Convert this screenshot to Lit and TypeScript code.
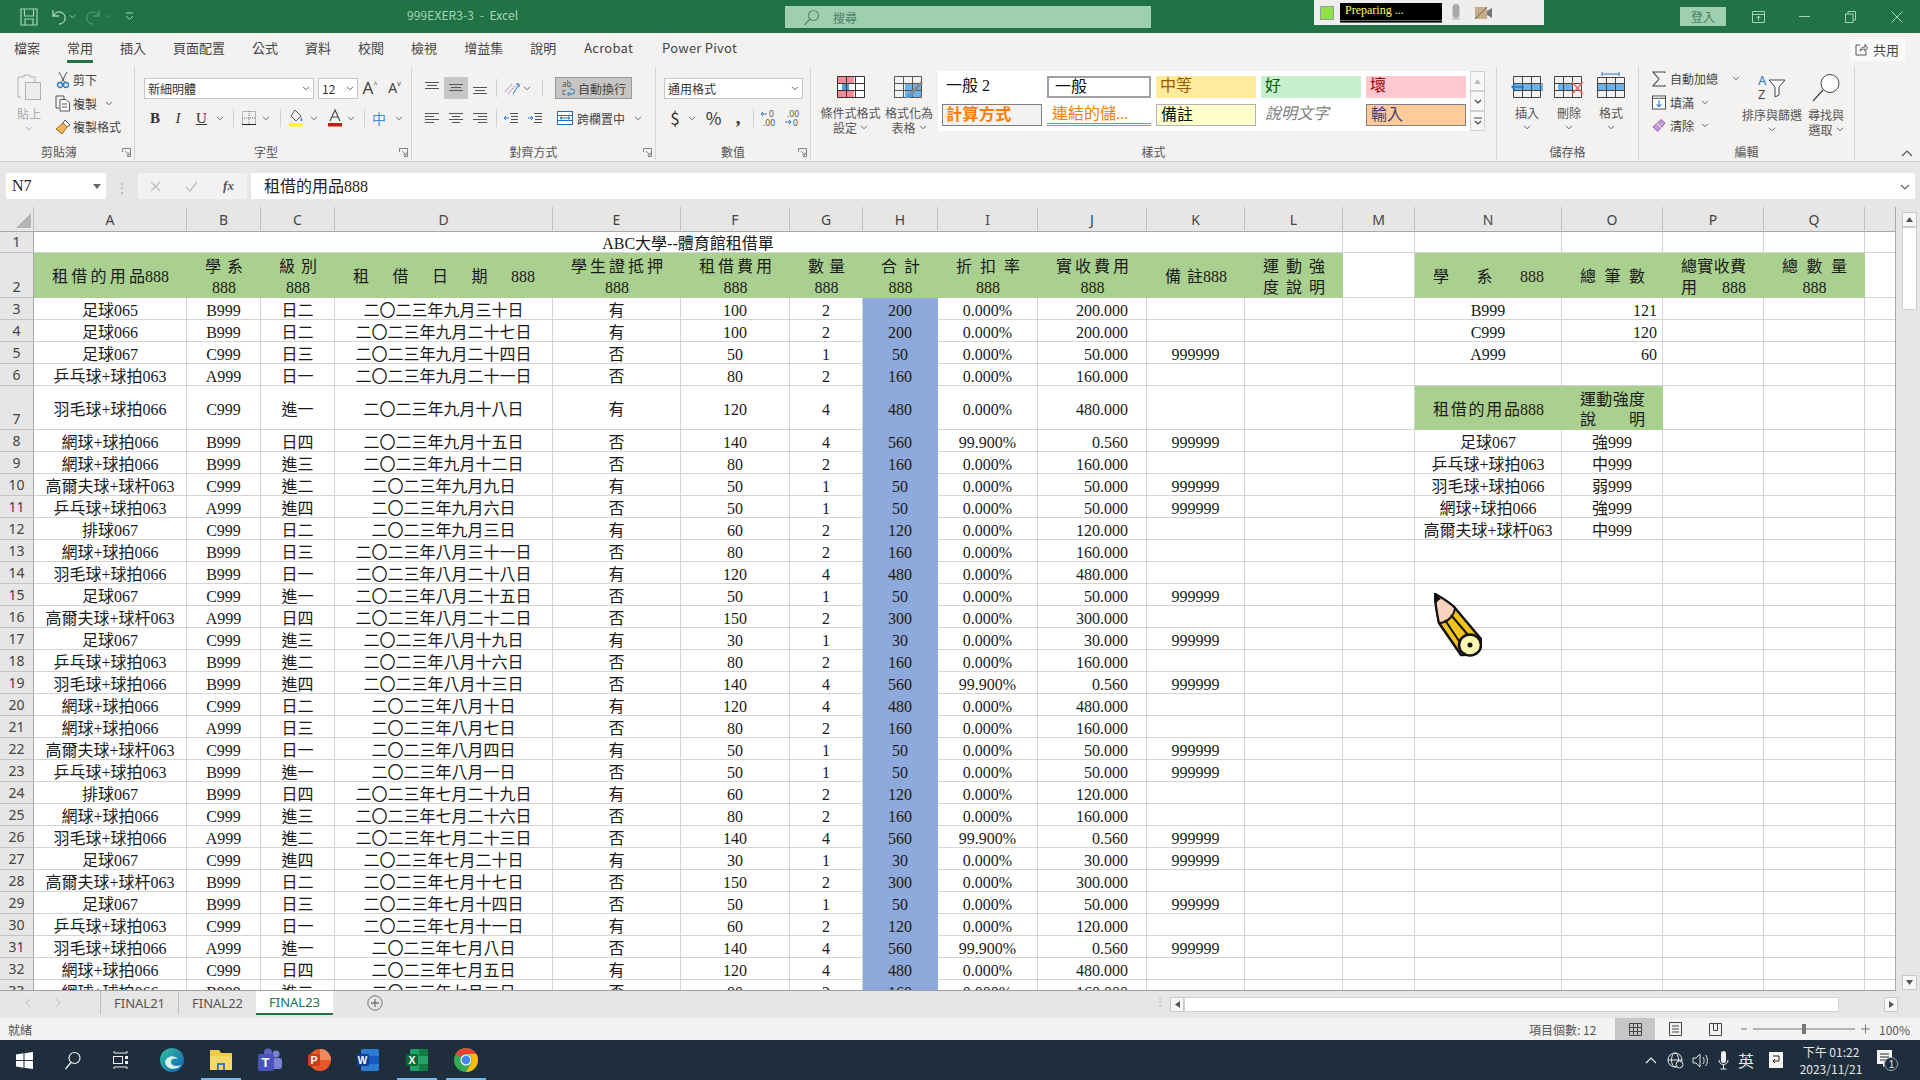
import { LitElement, html, css, svg } from "lit";
import { customElement } from "lit/decorators.js";

const DATA = `足球065 B999 日二 二〇二三年九月三十日 有 100 2 200 0.000% 200.000 -
足球066 B999 日二 二〇二三年九月二十七日 有 100 2 200 0.000% 200.000 -
足球067 C999 日三 二〇二三年九月二十四日 否 50 1 50 0.000% 50.000 999999
乒乓球+球拍063 A999 日一 二〇二三年九月二十一日 否 80 2 160 0.000% 160.000 -
羽毛球+球拍066 C999 進一 二〇二三年九月十八日 有 120 4 480 0.000% 480.000 -
網球+球拍066 B999 日四 二〇二三年九月十五日 否 140 4 560 99.900% 0.560 999999
網球+球拍066 B999 進三 二〇二三年九月十二日 否 80 2 160 0.000% 160.000 -
高爾夫球+球杆063 C999 進二 二〇二三年九月九日 有 50 1 50 0.000% 50.000 999999
乒乓球+球拍063 A999 進四 二〇二三年九月六日 否 50 1 50 0.000% 50.000 999999
排球067 C999 日二 二〇二三年九月三日 有 60 2 120 0.000% 120.000 -
網球+球拍066 B999 日三 二〇二三年八月三十一日 否 80 2 160 0.000% 160.000 -
羽毛球+球拍066 B999 日一 二〇二三年八月二十八日 有 120 4 480 0.000% 480.000 -
足球067 C999 進一 二〇二三年八月二十五日 否 50 1 50 0.000% 50.000 999999
高爾夫球+球杆063 A999 日四 二〇二三年八月二十二日 否 150 2 300 0.000% 300.000 -
足球067 C999 進三 二〇二三年八月十九日 有 30 1 30 0.000% 30.000 999999
乒乓球+球拍063 B999 進二 二〇二三年八月十六日 否 80 2 160 0.000% 160.000 -
羽毛球+球拍066 B999 進四 二〇二三年八月十三日 否 140 4 560 99.900% 0.560 999999
網球+球拍066 C999 日二 二〇二三年八月十日 有 120 4 480 0.000% 480.000 -
網球+球拍066 A999 日三 二〇二三年八月七日 否 80 2 160 0.000% 160.000 -
高爾夫球+球杆063 C999 日一 二〇二三年八月四日 有 50 1 50 0.000% 50.000 999999
乒乓球+球拍063 B999 進一 二〇二三年八月一日 否 50 1 50 0.000% 50.000 999999
排球067 B999 日四 二〇二三年七月二十九日 有 60 2 120 0.000% 120.000 -
網球+球拍066 C999 進三 二〇二三年七月二十六日 否 80 2 160 0.000% 160.000 -
羽毛球+球拍066 A999 進二 二〇二三年七月二十三日 否 140 4 560 99.900% 0.560 999999
足球067 C999 進四 二〇二三年七月二十日 有 30 1 30 0.000% 30.000 999999
高爾夫球+球杆063 B999 日二 二〇二三年七月十七日 否 150 2 300 0.000% 300.000 -
足球067 B999 日三 二〇二三年七月十四日 否 50 1 50 0.000% 50.000 999999
乒乓球+球拍063 C999 日一 二〇二三年七月十一日 有 60 2 120 0.000% 120.000 -
羽毛球+球拍066 A999 進一 二〇二三年七月八日 否 140 4 560 99.900% 0.560 999999
網球+球拍066 C999 日四 二〇二三年七月五日 有 120 4 480 0.000% 480.000 -
網球+球拍066 B999 進二 二〇二三年七月二日 否 80 2 160 0.000% 160.000 -`
  .split("\n").map((l) => l.split(" ").map((v) => (v === "-" ? "" : v)));

const HEADS_L = [
  ["租 借 的 用 品888"], ["學 系", "888"], ["級 別", "888"], ["租 借 日 期 888"],
  ["學 生 證 抵 押", "888"], ["租 借 費 用", "888"], ["數 量", "888"], ["合 計", "888"],
  ["折 扣 率", "888"], ["實 收 費 用", "888"], ["備 註888"], ["運 動 強", "度 說 明"],
];
const HEADS_R = [["學 系 888"], ["總 筆 數"], ["總 實 收 費", "用 888"], ["總 數 量", "888"]];
const HEADS_7 = [["租 借 的 用 品888"], ["運 動 強 度", "說 明"]];
const SIDE: Record<number, [string, string, string]> = {
  3: ["B999", "121", "rs"], 4: ["C999", "120", "rs"], 5: ["A999", "60", "rs"],
  8: ["足球067", "強999", ""], 9: ["乒乓球+球拍063", "中999", ""], 10: ["羽毛球+球拍066", "弱999", ""],
  11: ["網球+球拍066", "強999", ""], 12: ["高爾夫球+球杆063", "中999", ""],
};

const chev = (c = "#666") => svg`<svg width="8" height="5" viewBox="0 0 8 5"><path d="M1 .8l3 3 3-3" fill="none" stroke="${c}" stroke-width="1"/></svg>`;
const launcher = () => html`<svg class="launch" width="9" height="9" viewBox="0 0 9 9"><path d="M.5 4V.5H8.5V8.5H5M3 3l4 4M7 4.5V7H4.5" fill="none" stroke="#777" stroke-width=".9"/></svg>`;
const lines = (kind: "top" | "mid" | "bot") => svg`<svg width="16" height="16" viewBox="0 0 16 16"><path d="${kind === "top" ? "M1 2.5H15M3 5.5H13M1 8.5H15" : kind === "mid" ? "M1 4.5H15M3 7.5H13M1 10.5H15" : "M1 7.5H15M3 10.5H13M1 13.5H15"}" stroke="#555" stroke-width="1"/></svg>`;
const halign = (kind: "l" | "c" | "r") => svg`<svg width="16" height="16" viewBox="0 0 16 16"><path d="${kind === "l" ? "M1 3.5H15M1 6.5H10M1 9.5H15M1 12.5H10" : kind === "c" ? "M1 3.5H15M4 6.5H12M1 9.5H15M4 12.5H12" : "M1 3.5H15M6 6.5H15M1 9.5H15M6 12.5H15"}" stroke="#555" stroke-width="1"/></svg>`;

@customElement("app-root")
export class AppRoot extends LitElement {
  static styles = css`
    :host { display: block; width: 1920px; height: 1080px; overflow: hidden; background: #e6e6e6;
      font-family: "Noto Sans CJK TC", "Noto Sans", sans-serif; font-size: 12px; color: #444; }
    * { box-sizing: border-box; }
    svg { display: block; flex: none; }
    .page { display: flex; flex-direction: column; height: 1080px; }

    .title { height: 33px; background: #217346; display: flex; color: #a3d6b8; flex: none; }
    .qat { width: 407px; display: flex; align-items: center; padding-left: 20px; flex: none; }
    .qat .save { margin-right: 13px; }
    .qat .gapa { margin: 0 10px 0 3px; }
    .qat .gapb { margin: 0 14px 0 3px; }
    .doc { width: 378px; flex: none; line-height: 30px; font-size: 12px; letter-spacing: .1px; }
    .search { width: 366px; height: 22px; margin-top: 6px; background: #9dcfb0; display: flex; align-items: center; padding-left: 18px; gap: 13px; color: #4f8065; flex: none; font-size: 12px; }
    .rec { margin-left: 163px; width: 230px; height: 25px; background: #eeeeee; display: flex; align-items: center; padding-left: 6px; flex: none; }
    .rec .sq { width: 14px; height: 14px; background: #8fe04a; border: 1px solid #9a9a9a; }
    .rec .blk { width: 102px; height: 20px; margin: 0 9px 0 6px; background: #000; color: #ffff66; font: 12px/15px "Liberation Serif", serif; padding-left: 5px; border-bottom: 3px double #666; }
    .rec .cam { margin-left: 14px; }
    .login { margin: 7px 0 0 136px; width: 46px; height: 19px; background: #9dcfb0; color: #4f8065; text-align: center; line-height: 19px; flex: none; }
    .wbtns { display: flex; margin-left: 9px; }
    .wbtns div { width: 46.3px; height: 33px; display: flex; align-items: center; justify-content: center; }

    .tabs { height: 33px; background: #f3f2f1; display: flex; align-items: center; padding: 0 0 3px .5px; font-size: 13px; flex: none; }
    .tab { padding: 0 13.5px; position: relative; line-height: 30px; color: #444; }
    .tab.lat { letter-spacing: .25px; padding: 0 14.5px; }
    .tab.on::after { content: ""; position: absolute; left: 13.5px; right: 13.5px; top: 27px; height: 2.5px; background: #217346; }
    .share { margin-left: auto; margin-right: 15.5px; width: 55px; height: 22px; background: #fafafa; display: flex; align-items: center; justify-content: center; gap: 5px; font-size: 13px; margin-top: 3px; }

    .ribbon { height: 96px; background: #f3f2f1; border-bottom: 1px solid #d2d0ce; display: flex; flex: none; }
    .group { position: relative; height: 93px; margin-top: 1px; padding-top: 9px; border-right: 1px solid #d8d6d4; flex: none; display: flex; flex-direction: column; }
    .g1 { width: 135px; } .g2 { width: 277px; } .g3 { width: 244px; } .g4 { width: 155px; } .g5 { width: 686px; } .g6 { width: 142px; } .g7 { width: 216px; }
    .gbody { display: flex; align-items: flex-start; }
    .glabel { margin-top: auto; height: 16px; line-height: 16px; text-align: center; color: #555; flex: none; }
    .g1 .glabel { padding-right: 16px; } .g2 .glabel { padding-right: 14px; }
    .launch { position: absolute; right: 3px; bottom: 3px; }

    .paste { width: 46px; margin-left: 6px; margin-top: -3px; display: flex; flex-direction: column; align-items: center; color: #aaa; }
    .paste span { line-height: 15px; margin-top: 5px; margin-bottom: 5px; }
    .clip { margin-left: 1px; margin-top: -8px; }
    .clip div { height: 23.5px; display: flex; align-items: center; }
    .clip .ic { width: 20px; display: flex; justify-content: center; }
    .clip svg.cv { margin-left: 8px; }

    .rows { display: flex; flex-direction: column; gap: 8px; margin-top: 1px; }
    .r-font { padding-left: 9px; } .r-align { padding-left: 8px; } .r-num { padding: 0 7px 0 8px; }
    .grid { display: grid; align-items: center; justify-items: center; height: 22px; }
    .select { height: 21px; background: #fff; border: 1px solid #c8c6c4; display: flex; align-items: center; justify-content: space-between; padding: 0 3px 0 3px; color: #333; }
    .f1 { grid-template-columns: 170px 4px 40px 24px 25px; }
    .f2 { grid-template-columns: 22px 24px 23px 14px 13px 18px 15px 14px 18px 18px 23px 10px 16px 14px 26px; }
    .a1 { grid-template-columns: 24px 24px 24px 8px 24px 6px 25px 77px; }
    .a2 { grid-template-columns: 24px 24px 24px 8px 22px 25px 10px 76px 10px; }
    .n1 { grid-template-columns: 1fr; }
    .n2 { grid-template-columns: 22px 12px 31px 18px 13px 17px 30px; }
    .w-font, .w-num { justify-self: stretch; } .w-size { grid-column: 3; justify-self: stretch; }
    .bigA { font-size: 17px; line-height: 22px; color: #444; font-family: "Noto Sans", sans-serif; }
    .smallA { font-size: 14px; line-height: 22px; color: #444; font-family: "Noto Sans", sans-serif; }
    .bigA sup, .smallA sup { font-size: 7px; vertical-align: 7px; line-height: 0; }
    .tb { font-family: "Liberation Serif", serif; font-size: 15px; color: #333; line-height: 22px; }
    .tb.b { font-weight: 700; } .tb.i { font-style: italic; } .tb.u { text-decoration: underline; }
    .vsep { width: 1px; height: 18px; background: #d2d0ce; }
    .sel { justify-self: stretch; height: 22px; background: #c8c6c4; border: 1px solid #9a9a9a; display: flex; align-items: center; justify-content: center; gap: 2px; white-space: nowrap; }
    .sel2 { justify-self: stretch; height: 22px; background: #c8c6c4; display: flex; align-items: center; justify-content: center; }
    .merge { display: flex; align-items: center; gap: 4px; justify-self: start; white-space: nowrap; }
    .phon { color: #3f8fd6; font-size: 14px; line-height: 22px; }
    .dollar { font-size: 17px; color: #333; line-height: 22px; }
    .pct { font-size: 17px; color: #333; line-height: 22px; }
    .comma { font: 700 19px/14px "Liberation Serif", serif; color: #333; }

    .big { display: flex; flex-direction: column; align-items: center; line-height: 15px; color: #555; text-align: center; }
    .big .lab { margin-top: 7px; white-space: nowrap; }
    .big .low { display: flex; align-items: center; gap: 3px; justify-content: center; height: 15px; white-space: nowrap; }
    .cf { width: 59px; margin-left: 10px; margin-top: 0; }
    .cf2 { width: 58px; }
    .gal { width: 547px; height: 60px; margin-top: -5px; display: flex; background: #fff; flex: none; }
    .gal-cells { width: 532px; padding: 5px 0 0 4px; display: grid; grid-template-columns: 100px 104px 100px 100px 100px; grid-template-rows: 22px 22px; gap: 6px 5px; font: 16px/20px "Liberation Serif", "Noto Sans CJK TC", serif; color: #111; }
    .st { padding-left: 4px; line-height: 20px; white-space: nowrap; }
    .st.plain { border: 2px solid #a0a0a0; background: #fff; padding-left: 6px; line-height: 18px; }
    .st.mid { background: #ffeb9c; color: #9c5700; }
    .st.good { background: #c6efce; color: #006100; }
    .st.bad { background: #ffc7ce; color: #9c0006; }
    .st.calc { background: #f2f2f2; border: 1px solid #7f7f7f; color: #fa7d00; font-weight: 700; padding-left: 3px; letter-spacing: .4px; }
    .st.link { color: #fa7d00; border-bottom: 3px double #fa7d00; padding-left: 5px; }
    .st.note { background: #ffffcc; border: 1px solid #b2b2b2; padding-left: 4px; }
    .st.desc { color: #7f7f7f; font-style: italic; }
    .st.inp { background: #ffcc99; border: 1px solid #7f7f7f; color: #3f3f76; padding-left: 4px; }
    .gal-btns { width: 15px; display: flex; flex-direction: column; }
    .gal-btns div { flex: 1; background: #f8f8f8; border: 1px solid #d2d0ce; display: flex; align-items: center; justify-content: center; }
    .cellcol { width: 42px; }
    .cells-pad { padding-left: 9px; }
    .fmt { margin-top: -4px; }
    .edit { margin: -9px 0 0 13px; width: 92px; flex: none; }
    .edit div { height: 23.5px; display: flex; align-items: center; gap: 4px; }
    .edit svg.cv { margin-left: 3px; }
    .edit svg.cv2 { margin-left: 10px; }
    .sortcol { width: 56px; margin-top: -3px; } .findcol { width: 52px; margin-top: -3px; }
    .sortcol .lab { margin-top: 7px; } .findcol .lab { margin-top: 4px; }
    .collapse { align-self: flex-end; margin: 0 0 4px 46px; }

    .fbar { height: 45px; padding: 11px 5px 0 6px; display: flex; flex: none; background: #e6e6e6; }
    .namebox { width: 100px; height: 26px; background: #fff; display: flex; align-items: center; justify-content: space-between; padding: 0 5px 0 6px; font: 16px "Liberation Serif", serif; color: #222; }
    .grip { width: 32px; height: 26px; display: flex; align-items: center; justify-content: center; color: #aaa; font-size: 12px; }
    .fxs { width: 109px; height: 26px; background: #f2f2f2; display: grid; grid-template-columns: 34px 38px 37px; align-items: center; justify-items: center; }
    .fx { font: italic 700 13px "Liberation Serif", serif; color: #555; }
    .finput { margin-left: 4px; flex: 1; height: 26px; background: #fff; display: flex; align-items: center; justify-content: space-between; padding: 2px 5px 0 13px; font: 16px/20px "Liberation Serif", "Noto Sans CJK TC", serif; color: #222; }

    .work { height: 784px; position: relative; display: flex; overflow: hidden; flex: none; }
    .sheet { width: 1896px; height: 784px; overflow: hidden; flex: none; display: grid; background: #fff;
      grid-template-columns: 34px 153px 74px 74px 218px 128px 109px 73px 75px 100px 109px 98px 98px 72px 147px 101px 101px 101px 31px;
      grid-template-rows: 25px 21px 45px repeat(4, 22px) 44px repeat(26, 22px);
      font: 16px/20px "Liberation Serif", "Noto Sans CJK TC", serif; color: #1a1a1a; border-right: 1px solid #a8a8a8; border-bottom: 1px solid #a0a0a0; }
    .ch { background: #e6e6e6; border-right: 1px solid #c0c0c0; border-bottom: 1px solid #a8a8a8; display: flex; align-items: center; justify-content: center; font: 14px "Noto Sans", sans-serif; color: #444; }
    .corner { background: #e6e6e6; border-right: 1px solid #c0c0c0; border-bottom: 1px solid #a8a8a8; display: flex; align-items: flex-end; justify-content: flex-end; padding: 0 2px 3px 0; }
    .rh { background: #e6e6e6; border-right: 1px solid #a8a8a8; border-bottom: 1px solid #c4c4c4; display: flex; align-items: flex-end; justify-content: center; font: 14px/20px "Noto Sans", sans-serif; color: #444; }
    .c { border-right: 1px solid #d4d4d4; border-bottom: 1px solid #d4d4d4; display: flex; align-items: center; justify-content: center; padding-top: 4px; white-space: nowrap; overflow: hidden; }
    .span { grid-column: span 12; padding-top: 3px; }
    .blue { background: #8ea9db; border-color: #8ea9db; }
    .right { justify-content: flex-end; padding-right: 18px; }
    .rs { justify-content: flex-end; padding-right: 5px; }
    .hd { background: #a9d08e; border: 0; flex-direction: column; align-items: stretch; justify-content: center; padding: 4px 18px 0; line-height: 20.5px; }
    .ln { display: flex; justify-content: space-between; }
    .ln.one { justify-content: center; }
    .pencil { position: absolute; left: 1434px; top: 386px; }

    .vbar { width: 24px; padding: 5px 3px 1px 6px; display: flex; flex-direction: column; flex: none; }
    .vbar .arr { height: 15px; background: #f8f8f8; border: 1px solid #c8c8c8; display: flex; align-items: center; justify-content: center; flex: none; }
    .vbar .thumb { height: 83px; background: #fff; border: 1px solid #d0d0d0; flex: none; }
    .vbar .trk { flex: 1; background: #e6e6e6; }

    .sheets { height: 27px; background: #e6e6e6; display: flex; flex: none; color: #555; font-size: 13px; font-family: "Noto Sans", sans-serif; }
    .nav { width: 100px; display: flex; align-items: center; padding-left: 26px; gap: 24px; height: 23px; }
    .st-tab { width: 78px; height: 23px; border-left: 1px solid #bdbdbd; display: flex; align-items: center; justify-content: center; color: #555; line-height: 16px; }
    .st-tab.act { width: 77px; height: 24px; background: #fff; color: #217346; border: 0; border-bottom: 2px solid #217346; }
    .plus { margin: 4px 0 0 34px; width: 16px; height: 16px; }
    .dots { margin: 0 0 0 770px; width: 14px; text-align: center; line-height: 20px; color: #888; font-size: 10px; }
    .hs { margin: 6px 0 0 3px; display: flex; height: 15px; width: 728px; }
    .hs .btn { width: 14px; background: #f8f8f8; border: 1px solid #c8c8c8; display: flex; align-items: center; justify-content: center; flex: none; }
    .hs .thumb { width: 655px; background: #fff; border: 1px solid #d0d0d0; flex: none; }
    .hs .rest { flex: 1; }

    .status { height: 22px; background: #f3f2f1; display: flex; align-items: center; padding-left: 8px; flex: none; color: #555; }
    .status span { white-space: nowrap; flex: none; }
    .ready { width: 24px; }
    .status .count { margin-left: 1497px; width: 86px; }
    .view { width: 40px; height: 22px; display: flex; align-items: center; justify-content: center; flex: none; }
    .view.on { background: #c8c6c4; }
    .zoom-s { width: 137px; display: flex; align-items: center; height: 22px; margin-left: 2px; flex: none; }
    .zoom-v { margin-left: 5px; color: #555; }

    .taskbar { height: 40px; background: #1f2e3c; display: flex; flex: none; color: #e4e6e8; }
    .task { width: 48px; height: 40px; display: flex; align-items: center; justify-content: center; position: relative; flex: none; }
    .t3 { margin-right: 3px; } .task.app { width: 49px; }
    .task.act::after { content: ""; position: absolute; left: 5px; right: 4px; bottom: 0; height: 2px; background: #76b9ed; }
    .tray { margin-left: auto; display: grid; grid-template-columns: 24px 25px 24px 22px 24px 36px 74px 38px 14px; align-items: center; justify-items: center; height: 40px; }
    .ying { font-size: 16px; color: #e8e8e8; }
    .clock { text-align: center; line-height: 17px; font-size: 12px; white-space: nowrap; }
  `;

  private head(lines: string[]) {
    return html`<div class="c hd">${lines.map((l) => {
      const t = l.split(" ");
      return html`<div class="ln ${t.length === 1 ? "one" : ""}">${t.map((x) => html`<span>${x}</span>`)}</div>`;
    })}</div>`;
  }

  private renderSheet() {
    const cols = "ABCDEFGHIJKLMNOPQ".split("");
    const blank = html`<div class="c"></div>`;
    return html`<div class="sheet">
      <div class="corner"><svg width="15" height="15" viewBox="0 0 15 15"><path d="M15 0V15H0Z" fill="#b4b4b4"/></svg></div>
      ${cols.map((c) => html`<div class="ch">${c}</div>`)}
      <div class="ch"></div>

      <div class="rh">1</div>
      <div class="c span">ABC大學--體育館租借單</div>
      ${blank}${blank}${blank}${blank}${blank}${blank}

      <div class="rh">2</div>
      ${HEADS_L.map((h) => this.head(h))}
      ${blank}
      ${HEADS_R.map((h) => this.head(h))}
      ${blank}

      ${DATA.map((row, i) => {
        const n = i + 3;
        const s = SIDE[n];
        return html`<div class="rh">${n}</div>
          ${row.slice(0, 10).map((v, k) => html`<div class="c ${k === 7 ? "blue" : ""} ${k === 9 ? "right" : ""}">${v}</div>`)}
          <div class="c">${row[10]}</div>
          ${blank}${blank}
          ${n === 7
            ? html`${this.head(HEADS_7[0])}${this.head(HEADS_7[1])}`
            : s
            ? html`<div class="c">${s[0]}</div><div class="c ${s[2]}">${s[1]}</div>`
            : html`${blank}${blank}`}
          ${blank}${blank}${blank}`;
      })}
    </div>`;
  }

  private renderRibbon() {
    return html`<div class="ribbon">
      <div class="group g1">
        <div class="gbody">
          <div class="paste">
            <svg width="27" height="28" viewBox="0 0 27 28"><path d="M2 4H8V2H14V4H19V9M5 24H2V4" fill="none" stroke="#b0b0b0"/><rect x="9.5" y="9.5" width="15" height="17" fill="#ececec" stroke="#b0b0b0"/></svg>
            <span>貼上</span>
            ${chev("#aaa")}
          </div>
          <div class="clip">
            <div><span class="ic"><svg width="14" height="18" viewBox="0 0 14 18"><path d="M3 1L9 12M11 1L5 12" stroke="#555" fill="none"/><circle cx="4" cy="14" r="2.5" fill="none" stroke="#2b79c2" stroke-width="1.3"/><circle cx="10" cy="14" r="2.5" fill="none" stroke="#2b79c2" stroke-width="1.3"/></svg></span><span>剪下</span></div>
            <div><span class="ic"><svg width="16" height="17" viewBox="0 0 16 17"><path d="M4 13H1V1H9V4" fill="none" stroke="#555"/><path d="M5 4.5H11L14.5 8V16H5Z M7 9H12M7 12H12" fill="#fff" stroke="#555"/></svg></span><span>複製</span><svg class="cv" width="8" height="5" viewBox="0 0 8 5"><path d="M1 .8l3 3 3-3" fill="none" stroke="#666"/></svg></div>
            <div><span class="ic"><svg width="17" height="17" viewBox="0 0 17 17"><path d="M10 2L15 7L12 9L8 5Z" fill="#f5f5f5" stroke="#555"/><path d="M8 5L12 9L7 16L1 11Z" fill="#f2b257" stroke="#a86a20"/></svg></span><span>複製格式</span></div>
          </div>
        </div>
        <div class="glabel">剪貼簿</div>${launcher()}
      </div>

      <div class="group g2">
        <div class="rows r-font">
          <div class="grid f1">
            <div class="select w-font"><span>新細明體</span>${chev()}</div>
            <div class="select w-size"><span>12</span>${chev()}</div>
            <span class="bigA">A<sup>^</sup></span>
            <span class="smallA">A<sup>v</sup></span>
          </div>
          <div class="grid f2">
            <span class="tb b">B</span><span class="tb i">I</span><span class="tb u">U</span>${chev()}
            <i class="vsep"></i>
            <svg width="16" height="16" viewBox="0 0 16 16"><rect x="1.5" y="1.5" width="13" height="13" fill="none" stroke="#777" stroke-dasharray="1 1"/><path d="M8 1V15M1 8H15" stroke="#777" stroke-dasharray="1 1"/><path d="M1 14.5H15" stroke="#222"/></svg>
            ${chev()}<i class="vsep"></i>
            <svg width="16" height="18" viewBox="0 0 16 18"><path d="M7 1L13 7L8 12L3 7Z" fill="none" stroke="#555"/><path d="M13 8c1 2 2 3 1 4s-2-1-1-4" fill="#2b79c2"/><rect x="1" y="14" width="14" height="3.5" fill="#ffff00"/></svg>
            ${chev()}
            <svg width="16" height="18" viewBox="0 0 16 18"><path d="M3 12L8 1L13 12M5 8H11" fill="none" stroke="#444" stroke-width="1.1"/><rect x="1" y="14" width="14" height="3.5" fill="#e01010"/></svg>
            ${chev()}<i class="vsep"></i>
            <span class="phon">中</span>${chev()}
          </div>
        </div>
        <div class="glabel">字型</div>${launcher()}
      </div>

      <div class="group g3">
        <div class="rows r-align">
          <div class="grid a1">
            ${lines("top")}
            <div class="sel2">${lines("mid")}</div>
            ${lines("bot")}
            <i class="vsep"></i>
            <svg width="18" height="16" viewBox="0 0 18 16"><path d="M2 12L9 4M5 14L12 6" stroke="#8a6fb0" stroke-dasharray="2 1" fill="none"/><path d="M10 14L16 4M13 4H16V7" stroke="#2b79c2" fill="none"/></svg>
            ${chev()}
            <i class="vsep"></i>
            <div class="sel"><svg width="15" height="18" viewBox="0 0 15 18"><text x="1" y="8" font-size="8" fill="#555" font-family="Noto Sans">ab</text><text x="1" y="16" font-size="8" fill="#555" font-family="Noto Sans">c</text><path d="M7 15H11A2.500 2.500 0 0 0 11 10H9M8.500 13L6.500 15L8.500 17" fill="none" stroke="#2b79c2"/></svg><span>自動換行</span></div>
          </div>
          <div class="grid a2">
            ${halign("l")}${halign("c")}${halign("r")}
            <i class="vsep"></i>
            <svg width="16" height="16" viewBox="0 0 16 16"><path d="M7 3.5H15M8 6.5H15M8 9.5H15M7 12.5H15" stroke="#555"/><path d="M6 8H1M3 6L1 8L3 10" stroke="#2b79c2" fill="none"/></svg>
            <svg width="16" height="16" viewBox="0 0 16 16"><path d="M7 3.5H15M8 6.5H15M8 9.5H15M7 12.5H15" stroke="#555"/><path d="M1 8H6M4 6L6 8L4 10" stroke="#2b79c2" fill="none"/></svg>
            <span></span>
            <div class="merge"><svg width="16" height="16" viewBox="0 0 16 16"><rect x=".5" y="1.5" width="15" height="13" fill="#fff" stroke="#1f6fb5"/><path d="M.5 5.5H15.5M.5 10.5H15.5" stroke="#1f6fb5"/><path d="M3 8H13M5 6.5L3 8L5 9.5M11 6.5L13 8L11 9.5" stroke="#1f6fb5" fill="none"/></svg><span>跨欄置中</span></div>
            ${chev()}
          </div>
        </div>
        <div class="glabel">對齊方式</div>${launcher()}
      </div>

      <div class="group g4">
        <div class="rows r-num">
          <div class="grid n1"><div class="select w-num"><span>通用格式</span>${chev()}</div></div>
          <div class="grid n2">
            <span class="dollar">$</span>${chev()}<span class="pct">%</span><span class="comma">,</span>
            <i class="vsep"></i>
            <svg width="17" height="18" viewBox="0 0 17 18"><path d="M1 5H7M3 3L1 5L3 7" stroke="#2b79c2" fill="none"/><text x="9" y="8" font-size="8.500" fill="#555" font-family="Noto Sans">0</text><text x="3" y="17" font-size="8.500" fill="#555" font-family="Noto Sans">.00</text></svg>
            <svg width="17" height="18" viewBox="0 0 17 18"><text x="3" y="8" font-size="8.500" fill="#555" font-family="Noto Sans">.00</text><path d="M1 13H7M5 11L7 13L5 15" stroke="#2b79c2" fill="none"/><text x="9" y="17" font-size="8.500" fill="#555" font-family="Noto Sans">0</text></svg>
          </div>
        </div>
        <div class="glabel">數值</div>${launcher()}
      </div>

      <div class="group g5">
        <div class="gbody">
          <div class="big cf">
            <svg width="28" height="22" viewBox="0 0 28 22"><rect width="28" height="22" fill="#fff"/><rect x="0" y="0" width="17" height="7" fill="#f78a97"/><rect x="0" y="15" width="17" height="7" fill="#f78a97"/><rect x="5" y="7" width="7" height="8" fill="#5b9bd5"/><path d="M.5.5H27.5V21.5H.5ZM9.5 0V22M18.5 0V22M0 7.5H28M0 14.5H28" fill="none" stroke="#333"/></svg>
            <span class="lab">條件式格式</span>
            <span class="low">設定 ${chev()}</span>
          </div>
          <div class="big cf2">
            <svg width="30" height="22" viewBox="0 0 30 22"><rect x="11" y="7" width="16" height="15" fill="#6eb2e8"/><path d="M.5.5H27.5V21.5H.5ZM9.5 0V22M18.5 0V22M0 7.5H28M0 14.5H28" fill="none" stroke="#555"/><path d="M28 6L17 18" stroke="#8a8a8a" stroke-width="3"/><path d="M17 17c-3 0-4 3-6 5c3 0 7 0 8-3Z" fill="#5b9bd5"/></svg>
            <span class="lab">格式化為</span>
            <span class="low">表格 ${chev()}</span>
          </div>
          <div class="gal">
            <div class="gal-cells">
              <div class="st">一般 2</div><div class="st plain">一般</div><div class="st mid">中等</div><div class="st good">好</div><div class="st bad">壞</div>
              <div class="st calc">計算方式</div><div class="st link">連結的儲...</div><div class="st note">備註</div><div class="st desc">說明文字</div><div class="st inp">輸入</div>
            </div>
            <div class="gal-btns">
              <div><svg width="7" height="5" viewBox="0 0 7 5"><path d="M3.5 0L7 5H0Z" fill="#bbb"/></svg></div>
              <div><svg width="8" height="5" viewBox="0 0 8 5"><path d="M1 1l3 3 3-3" fill="none" stroke="#444" stroke-width="1.2"/></svg></div>
              <div><svg width="8" height="8" viewBox="0 0 8 8"><path d="M0 1H8M1 4l3 3 3-3" fill="none" stroke="#444" stroke-width="1.2"/></svg></div>
            </div>
          </div>
        </div>
        <div class="glabel">樣式</div>
      </div>

      <div class="group g6">
        <div class="gbody cells-pad">
          <div class="big cellcol">
            <svg width="32" height="22" viewBox="0 0 32 22"><rect x="2" y="7" width="30" height="8" fill="#6eb2e8"/><path d="M2.5.5H29.5V21.5H2.5ZM11.5 0V22M20.5 0V22M2 7.5H30M2 14.5H30" fill="none" stroke="#444"/><path d="M13 11H1M5 7L1 11L5 15" fill="none" stroke="#2b79c2" stroke-width="1.4"/></svg>
            <span class="lab">插入</span><span class="low">${chev()}</span>
          </div>
          <div class="big cellcol">
            <svg width="30" height="22" viewBox="0 0 30 22"><rect x="4" y="7" width="14" height="8" fill="#6eb2e8"/><path d="M.5.5H27.5V21.5H.5ZM9.5 0V22M18.5 0V22M0 7.5H28M0 14.5H28" fill="none" stroke="#444"/><path d="M18 6L29 18M29 6L18 18" stroke="#e46a6a" stroke-width="1.6"/></svg>
            <span class="lab">刪除</span><span class="low">${chev()}</span>
          </div>
          <div class="big cellcol">
            <svg class="fmt" width="28" height="26" viewBox="0 0 28 26"><path d="M5 2H22M5 0V4M22 0V4" stroke="#2b79c2"/><rect y="11" x="1" width="26" height="7" fill="#6eb2e8"/><path d="M.5 5.5H27.5V25.500H.5ZM9.5 5V26M18.5 5V26M0 11.5H28M0 18.5H28" fill="none" stroke="#444"/></svg>
            <span class="lab">格式</span><span class="low">${chev()}</span>
          </div>
        </div>
        <div class="glabel">儲存格</div>
      </div>

      <div class="group g7">
        <div class="gbody">
          <div class="edit">
            <div><svg width="14" height="16" viewBox="0 0 14 16"><path d="M13 2V1H1L7 8L1 15H13V14" fill="none" stroke="#444" stroke-width="1.1"/></svg><span>自動加總</span><svg class="cv2" width="8" height="5" viewBox="0 0 8 5"><path d="M1 .8l3 3 3-3" fill="none" stroke="#666"/></svg></div>
            <div><svg width="14" height="15" viewBox="0 0 15 15"><rect x=".5" y=".5" width="14" height="14" fill="#fff" stroke="#444"/><path d="M0 3H15" stroke="#444"/><path d="M7.5 5V12M5 9.5L7.5 12L10 9.5" fill="none" stroke="#2b79c2" stroke-width="1.2"/></svg><span>填滿</span><svg class="cv" width="8" height="5" viewBox="0 0 8 5"><path d="M1 .8l3 3 3-3" fill="none" stroke="#666"/></svg></div>
            <div><svg width="14" height="15" viewBox="0 0 15 15"><path d="M10 1L14 5L6 14L1 9Z" fill="#c59ad5" stroke="#8d5ea8"/><path d="M5 5L10 10" stroke="#fff"/></svg><span>清除</span><svg class="cv" width="8" height="5" viewBox="0 0 8 5"><path d="M1 .8l3 3 3-3" fill="none" stroke="#666"/></svg></div>
          </div>
          <div class="big sortcol">
            <svg width="30" height="27" viewBox="0 0 30 27"><text x="1" y="12" font-size="13" fill="#2b79c2" font-family="Noto Sans">A</text><text x="1" y="26" font-size="13" fill="#444" font-family="Noto Sans">Z</text><path d="M12 7H28L22 14V22L18 24V14Z" fill="#fff" stroke="#444"/></svg>
            <span class="lab">排序與篩選</span><span class="low">${chev()}</span>
          </div>
          <div class="big findcol">
            <svg width="30" height="30" viewBox="0 0 30 30"><circle cx="19" cy="10.500" r="9" fill="#fff" stroke="#444"/><path d="M12 17L2 28" stroke="#444" stroke-width="1.2"/></svg>
            <span class="lab">尋找與</span><span class="low">選取 ${chev()}</span>
          </div>
        </div>
        <div class="glabel">編輯</div>
      </div>
      <svg class="collapse" width="12" height="7" viewBox="0 0 12 7"><path d="M1 6L6 1L11 6" fill="none" stroke="#555" stroke-width="1.2"/></svg>
    </div>`;
  }

  render() {
    return html`<div class="page">
      <div class="title">
        <div class="qat">
          <svg class="save" width="18" height="18" viewBox="0 0 18 18"><path d="M1 1H17V17H1ZM4.500 1V8H13.500V1M5 17V11H13V17" fill="none" stroke="#a3d6b8" stroke-width="1.2"/></svg>
          <svg width="15" height="16" viewBox="0 0 15 16"><path d="M2 1V7H8M2.500 7A6 6 0 1 1 8 15" fill="none" stroke="#a3d6b8" stroke-width="1.300"/></svg>
          <svg class="gapa" width="7" height="5" viewBox="0 0 8 5"><path d="M1 1l3 3 3-3" fill="none" stroke="#a3d6b8"/></svg>
          <svg width="15" height="16" viewBox="0 0 15 16"><path d="M13 1V7H7M12.500 7A6 6 0 1 0 7 15" fill="none" stroke="#4e9a71" stroke-width="1.300"/></svg>
          <svg class="gapb" width="7" height="5" viewBox="0 0 8 5"><path d="M1 1l3 3 3-3" fill="none" stroke="#4e9a71"/></svg>
          <svg width="9" height="9" viewBox="0 0 9 9"><path d="M1 1H8M1 4l3.500 3.500L8 4" fill="none" stroke="#a3d6b8"/></svg>
        </div>
        <div class="doc">999EXER3-3&nbsp; -&nbsp; Excel</div>
        <div class="search">
          <svg width="17" height="17" viewBox="0 0 17 17"><circle cx="10.500" cy="6.500" r="5" fill="none" stroke="#5b8a70" stroke-width="1.200"/><path d="M7 10L1.500 16" stroke="#5b8a70" stroke-width="1.400"/></svg>
          <span>搜尋</span>
        </div>
        <div class="rec">
          <div class="sq"></div>
          <div class="blk">Preparing ...</div>
          <svg width="10" height="18" viewBox="0 0 10 18"><rect x="1.500" width="7" height="14" rx="3.500" fill="#a8a8a8"/><path d="M1 15H9" stroke="#a8a8a8"/></svg>
          <svg class="cam" width="17" height="12" viewBox="0 0 17 12"><rect width="12" height="12" fill="#c9ab8a"/><path d="M12 4L17 1V11L12 8Z" fill="#777"/><path d="M0 12L12 0" stroke="#666"/></svg>
        </div>
        <div class="login">登入</div>
        <div class="wbtns">
          <div><svg width="13" height="12" viewBox="0 0 13 12"><path d="M.5.5H12.500V11.500H.5ZM0 3.500H13M6.500 5V9.500M4.500 7L6.500 5L8.500 7" fill="none" stroke="#a3d6b8"/></svg></div>
          <div><svg width="11" height="1" viewBox="0 0 11 1"><path d="M0 .5H11" stroke="#a3d6b8"/></svg></div>
          <div><svg width="11" height="12" viewBox="0 0 11 12"><path d="M.5 3H8V11.500H.5ZM3 3V.5H10.500V9H8" fill="none" stroke="#a3d6b8"/></svg></div>
          <div><svg width="12" height="12" viewBox="0 0 12 12"><path d="M.5.5L11.500 11.500M11.500.5L.5 11.500" stroke="#a3d6b8"/></svg></div>
        </div>
      </div>

      <div class="tabs">
        ${["檔案", "常用", "插入", "頁面配置", "公式", "資料", "校閱", "檢視", "增益集", "說明", "Acrobat", "Power Pivot"].map(
          (t) => html`<div class="tab ${t === "常用" ? "on" : ""} ${/^[A-Z]/.test(t) ? "lat" : ""}">${t}</div>`
        )}
        <div class="share">
          <svg width="13" height="13" viewBox="0 0 13 13"><path d="M5 2H1V12H11V8M5 8C5 5 8 4 10 4V1.500L12.500 5L10 8V6C8 6 6 6.500 5 8" fill="none" stroke="#555"/></svg>
          <span>共用</span>
        </div>
      </div>

      ${this.renderRibbon()}

      <div class="fbar">
        <div class="namebox"><span>N7</span><svg width="8" height="5" viewBox="0 0 8 5"><path d="M0 0H8L4 5Z" fill="#666"/></svg></div>
        <div class="grip">⋮</div>
        <div class="fxs">
          <svg width="11" height="11" viewBox="0 0 11 11"><path d="M1 1L10 10M10 1L1 10" stroke="#bbb" stroke-width="1.300"/></svg>
          <svg width="13" height="11" viewBox="0 0 13 11"><path d="M1 6L5 10L12 1" fill="none" stroke="#bbb" stroke-width="1.300"/></svg>
          <span class="fx">fx</span>
        </div>
        <div class="finput"><span>租借的用品888</span><svg width="10" height="6" viewBox="0 0 10 6"><path d="M1 1L5 5L9 1" fill="none" stroke="#666" stroke-width="1.200"/></svg></div>
      </div>

      <div class="work">
        ${this.renderSheet()}
        <div class="vbar">
          <div class="arr"><svg width="7" height="5" viewBox="0 0 7 5"><path d="M3.500 0L7 5H0Z" fill="#555"/></svg></div>
          <div class="thumb"></div>
          <div class="trk"></div>
          <div class="arr"><svg width="7" height="5" viewBox="0 0 7 5"><path d="M3.500 5L7 0H0Z" fill="#555"/></svg></div>
        </div>
        <svg class="pencil" width="48" height="64" viewBox="0 0 48 64">
          <path d="M1 1C8 5 16 10 21 15L47 46C47 54 38 63 27 62L5 30C3 20 1 10 1 1Z" fill="#f2c21d" stroke="#111" stroke-width="2.500" stroke-linejoin="round"/>
          <path d="M1 1C8 5 16 10 21 15C20 24 12 30 5 30C3 20 1 10 1 1Z" fill="#f9d3bd" stroke="#111" stroke-width="2"/>
          <path d="M1 1L7 6C4 7 3 9 2 11C1 7 1 4 1 1Z" fill="#111"/>
          <path d="M11 27L31 57M17 22L40 49" stroke="#111" stroke-width="2"/>
          <ellipse cx="36" cy="52" rx="11" ry="10.500" fill="#fbf7b0" stroke="#111" stroke-width="2.500"/>
          <circle cx="36" cy="52" r="2.500" fill="#111"/>
        </svg>
      </div>

      <div class="sheets">
        <div class="nav">
          <svg width="5" height="8" viewBox="0 0 5 8"><path d="M4 0L0 4L4 8" fill="none" stroke="#bbb"/></svg>
          <svg width="5" height="8" viewBox="0 0 5 8"><path d="M1 0L5 4L1 8" fill="none" stroke="#bbb"/></svg>
        </div>
        <div class="st-tab">FINAL21</div>
        <div class="st-tab">FINAL22</div>
        <div class="st-tab act">FINAL23</div>
        <svg class="plus" width="16" height="16" viewBox="0 0 16 16"><circle cx="8" cy="8" r="7.200" fill="none" stroke="#777"/><path d="M8 4V12M4 8H12" stroke="#777" stroke-width="1.300"/></svg>
        <div class="dots">⋮</div>
        <div class="hs">
          <div class="btn"><svg width="5" height="7" viewBox="0 0 5 7"><path d="M5 0V7L0 3.500Z" fill="#555"/></svg></div>
          <div class="thumb"></div>
          <div class="rest"></div>
          <div class="btn"><svg width="5" height="7" viewBox="0 0 5 7"><path d="M0 0V7L5 3.500Z" fill="#555"/></svg></div>
        </div>
      </div>

      <div class="status">
        <span class="ready">就緒</span>
        <span class="count">項目個數: 12</span>
        <div class="view on"><svg width="13" height="13" viewBox="0 0 13 13"><path d="M.5.5H12.500V12.500H.5ZM4.500 0V13M8.500 0V13M0 4.500H13M0 8.500H13" fill="none" stroke="#444"/></svg></div>
        <div class="view"><svg width="13" height="14" viewBox="0 0 13 14"><path d="M.5.5H12.500V13.500H.5Z M3 4H10M3 7H10M3 10H10" fill="none" stroke="#444"/></svg></div>
        <div class="view"><svg width="13" height="13" viewBox="0 0 13 13"><path d="M.5.5H12.500V12.500H.5ZM4.500 0V7.500H8.500V0" fill="none" stroke="#444"/></svg></div>
        <div class="zoom-s">
          <svg width="137" height="16" viewBox="0 0 137 16"><path d="M4 8H10M16 8H118M124 8H133M128.500 3.500V12.500" stroke="#777"/><rect x="65" y="3" width="4" height="10" fill="#777"/></svg>
        </div>
        <span class="zoom-v">100%</span>
      </div>

      <div class="taskbar">
        <div class="task"><svg width="17" height="17" viewBox="0 0 17 17"><path d="M0 2.400L7.500 1.300V8H0ZM8.500 1.200L17 0V8H8.500ZM0 9H7.500V15.700L0 14.600ZM8.500 9H17V17L8.500 15.800Z" fill="#fff"/></svg></div>
        <div class="task"><svg width="17" height="19" viewBox="0 0 17 19"><circle cx="10.500" cy="7" r="5.500" fill="none" stroke="#f0f0f0" stroke-width="1.200"/><path d="M7 11.500L1.500 18" stroke="#f0f0f0" stroke-width="1.300"/></svg></div>
        <div class="task t3"><svg width="17" height="18" viewBox="0 0 17 18"><path d="M2 0V2H15V0M2 18V16H15V18" stroke="#f0f0f0" fill="none"/><rect x="1.500" y="5.500" width="9" height="7" fill="none" stroke="#f0f0f0"/><rect x="13" y="5" width="3" height="3" fill="#f0f0f0"/><rect x="13" y="10" width="3" height="3" fill="#f0f0f0"/></svg></div>
        <div class="task app"><svg width="24" height="24" viewBox="0 0 24 24"><defs><linearGradient id="eg" x1="0" y1="0" x2="1" y2="1"><stop offset="0" stop-color="#35c1a0"/><stop offset="1" stop-color="#0f5fb5"/></linearGradient></defs><circle cx="12" cy="12" r="12" fill="url(#eg)"/><path d="M5 14C6 8 14 6 18 11C16 10 10 10 11 15C12 18 17 19 21 17C17 23 6 22 5 14Z" fill="#d8f3e8"/></svg></div>
        <div class="task app act"><svg width="22" height="22" viewBox="0 0 22 22"><path d="M0 1H9L11 4H22V21H0Z" fill="#f3c948"/><rect y="7" width="22" height="14" fill="#f7d968"/><path d="M7 21V14H15V21Z" fill="#2f7fc4"/><rect x="9" y="16" width="4" height="5" fill="#f7d968"/></svg></div>
        <div class="task app"><svg width="26" height="24" viewBox="0 0 26 24"><circle cx="19" cy="6" r="3.500" fill="#7b83d6"/><rect x="13" y="10" width="12" height="11" rx="3" fill="#7b83d6"/><circle cx="11" cy="4.500" r="4" fill="#5e67c4"/><rect x="1" y="6" width="16" height="17" rx="2" fill="#4b53bc"/><text x="4.500" y="19" font-size="13" font-weight="700" fill="#fff" font-family="Liberation Sans">T</text></svg></div>
        <div class="task app"><svg width="24" height="24" viewBox="0 0 24 24"><circle cx="13" cy="12" r="11" fill="#e8572a"/><path d="M13 1A11 11 0 0 1 24 12H13Z" fill="#f38a5e"/><rect x="1" y="6" width="12" height="12" rx="1.500" fill="#c43e1c"/><text x="3.500" y="16" font-size="10.500" font-weight="700" fill="#fff" font-family="Liberation Sans">P</text></svg></div>
        <div class="task app"><svg width="24" height="24" viewBox="0 0 24 24"><rect x="5" y="1" width="18" height="22" rx="1.500" fill="#2b7cd3"/><path d="M5 8H23V16H5Z" fill="#185abd"/><rect x="1" y="6" width="12" height="12" rx="1.500" fill="#103f91"/><text x="1.800" y="15.500" font-size="10" font-weight="700" fill="#fff" font-family="Liberation Sans">W</text></svg></div>
        <div class="task app act"><svg width="24" height="24" viewBox="0 0 24 24"><rect x="5" y="1" width="18" height="22" rx="1.500" fill="#21a366"/><path d="M14 1H23V8H14ZM14 16H23V23H14Z" fill="#107c41"/><rect x="1" y="6" width="12" height="12" rx="1.500" fill="#0b6a38"/><text x="3.500" y="16" font-size="10.500" font-weight="700" fill="#fff" font-family="Liberation Sans">X</text></svg></div>
        <div class="task app act"><svg width="24" height="24" viewBox="0 0 24 24"><circle cx="12" cy="12" r="12" fill="#34a853"/><path d="M12 0A12 12 0 0 1 22.400 6H12A6 6 0 0 0 6.800 9L1.600 6A12 12 0 0 1 12 0Z" fill="#ea4335"/><path d="M22.400 6A12 12 0 0 1 12 24L17.200 15A6 6 0 0 0 12 6Z" fill="#fbbc05"/><circle cx="12" cy="12" r="5.500" fill="#fff"/><circle cx="12" cy="12" r="4.400" fill="#4285f4"/></svg></div>
        <div class="tray">
          <svg width="12" height="7" viewBox="0 0 12 7"><path d="M1 6L6 1L11 6" fill="none" stroke="#f0f0f0" stroke-width="1.200"/></svg>
          <svg width="17" height="17" viewBox="0 0 17 17"><circle cx="8" cy="8" r="7" fill="none" stroke="#e8e8e8"/><ellipse cx="8" cy="8" rx="3.500" ry="7" fill="none" stroke="#e8e8e8"/><path d="M1 8H15" stroke="#e8e8e8"/><circle cx="12.500" cy="12.500" r="3.500" fill="#1f2e3c" stroke="#e8e8e8"/></svg>
          <svg width="17" height="15" viewBox="0 0 17 15"><path d="M1 5H4L8 1V14L4 10H1Z M11 4C12.500 6 12.500 9 11 11M13.500 2C16 5 16 10 13.500 13" fill="none" stroke="#e8e8e8"/></svg>
          <svg width="11" height="19" viewBox="0 0 11 19"><rect x="3" y="0" width="5" height="12" rx="2.500" fill="#f0f0f0"/><path d="M1 9C1 15 10 15 10 9M5.500 14V18M2.500 18H8.500" fill="none" stroke="#f0f0f0"/></svg>
          <span class="ying">英</span>
          <svg width="14" height="16" viewBox="0 0 14 16"><rect width="14" height="16" fill="#f5f5f5"/><path d="M4 4H10V9H5M6 7L4 9L6 11" fill="none" stroke="#222"/></svg>
          <div class="clock">下午 01:22<br />2023/11/21</div>
          <svg width="24" height="24" viewBox="0 0 24 24"><path d="M2 2H17V16H11L8 19V16H2Z" fill="#f5f5f5"/><path d="M5 6H14M5 9H14M5 12H11" stroke="#1f2e3c"/><circle cx="16" cy="16" r="6.500" fill="#1f2e3c" stroke="#aaa"/><text x="13.800" y="19.500" font-size="10" fill="#e8e8e8" font-family="Liberation Sans">1</text></svg>
          <span></span>
        </div>
      </div>
    </div>`;
  }
}
